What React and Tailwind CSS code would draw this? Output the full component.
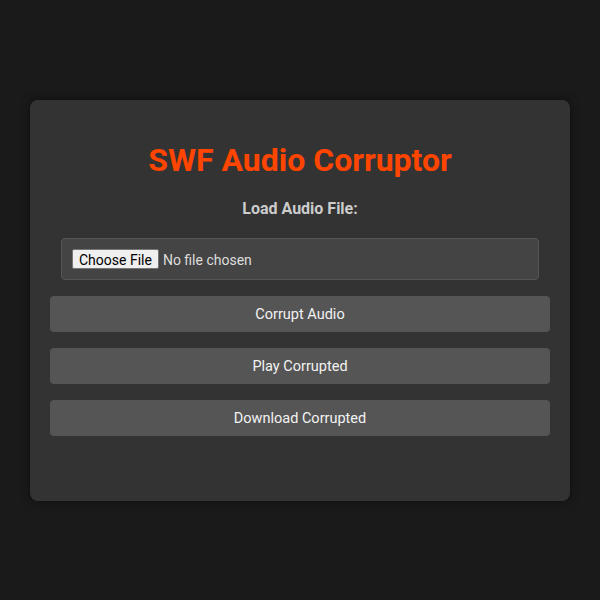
const App = () => {
  return (
    <div className="min-h-screen w-full bg-[#1a1a1a] flex items-center justify-center font-['Roboto',sans-serif]">
      <div className="w-[540px] h-[401px] bg-[#333333] rounded-[8px] shadow-[0_0_10px_rgba(0,0,0,0.5)] p-5 flex flex-col">
        <h1 className="text-[32px] font-bold text-[#ff4500] text-center leading-[38px] mt-[21px] mb-[20px]">
          SWF Audio Corruptor
        </h1>
        <label className="block text-center text-[16px] font-bold text-[#cccccc] leading-[19px] mb-5">
          Load Audio File:
        </label>
        <div className="mx-[11px] mb-4">
          <input
            type="file"
            accept="audio/*"
            className="block w-full h-[42px] p-[10px] bg-[#444444] border border-[#555555] rounded-[4px] text-[14px] leading-[20px] text-[#dddddd] file:bg-[#efefef] file:text-black file:border file:border-[#767676] file:rounded-[2px] file:px-[6px] file:h-[20px] file:mr-[4px] file:text-[14px]"
          />
        </div>
        <div className="flex flex-col gap-4">
          {['Corrupt Audio', 'Play Corrupted', 'Download Corrupted'].map(label => (
            <button
              key={label}
              className="w-full h-9 pt-[2px] bg-[#555555] rounded-[4px] text-[#f2f2f2] text-[14.5px] cursor-pointer"
            >
              {label}
            </button>
          ))}
        </div>
      </div>
    </div>
  );
};

export default App;
